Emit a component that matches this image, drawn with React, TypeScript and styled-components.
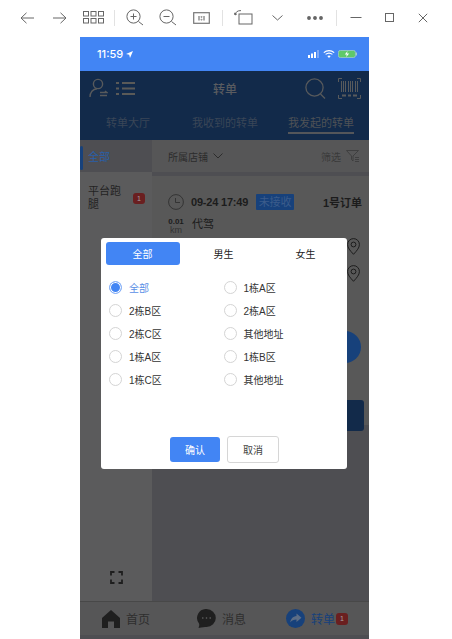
import React from "react";
import styled, { createGlobalStyle } from "styled-components";

const Global = createGlobalStyle`
  html, body { margin: 0; padding: 0; background: #fff; }
  body { font-family: "Liberation Sans", "Noto Sans CJK SC", sans-serif; width: 452px; height: 639px; overflow: hidden; }
  * { box-sizing: border-box; }
`;

const Page = styled.div`
  width: 452px;
  height: 639px;
  display: flex;
  flex-direction: column;
  overflow: hidden;
  background: #fff;
`;

const Toolbar = styled.div`
  height: 37px;
  display: flex;
  align-items: center;
  padding: 0 0 2px 10.5px;
  flex: none;
`;
const Slot = styled.div<{ $w: number }>`
  width: ${(p) => p.$w}px;
  display: flex;
  justify-content: center;
  align-items: center;
  flex: none;
`;
const ToolSep = styled.div`
  width: 1px;
  height: 16px;
  background: #e2e2e2;
  flex: none;
`;

const Phone = styled.div`
  position: relative;
  width: 289px;
  height: 602px;
  margin-left: 80px;
  display: flex;
  flex-direction: column;
  flex: none;
  overflow: hidden;
  background: #4e4e52;
`;
const StatusBar = styled.div`
  height: 34px;
  flex: none;
  background: #4285f4;
  display: flex;
  align-items: center;
  justify-content: space-between;
  padding: 0 12px 0 17px;
  color: #fff;
  font-size: 11px;
  font-family: Inter, sans-serif;
  font-weight: 500;
`;
const StatusTime = styled.div`
  display: flex;
  align-items: center;
  gap: 3px;
`;
const StatusIcons = styled.div`
  display: flex;
  align-items: center;
  gap: 3px;
`;

const Header = styled.div`
  height: 69px;
  flex: none;
  background: #122a4a;
  display: flex;
  flex-direction: column;
`;
const HeaderTop = styled.div`
  height: 34px;
  display: flex;
  align-items: center;
  padding: 0 8px 0 9px;
`;
const HeaderLeft = styled.div`
  display: flex;
  align-items: center;
  gap: 8px;
`;
const HeaderRight = styled.div`
  margin-left: auto;
  display: flex;
  align-items: center;
  gap: 12px;
`;
const HeaderTitle = styled.div`
  flex: 1;
  text-align: center;
  font-size: 12px;
  color: #5a5c60;
  font-weight: 500;
  padding-left: 10px;
`;
const HeaderTabs = styled.div`
  flex: 1;
  display: flex;
  padding-left: 26px;
`;
const HeaderTab = styled.div<{ $active?: boolean; $gap: number }>`
  margin-left: ${(p) => p.$gap}px;
  height: 29px;
  padding-top: 10px;
  font-size: 11px;
  line-height: 16px;
  white-space: nowrap;
  color: ${(p) => (p.$active ? "#4f5256" : "#3a4657")};
  border-bottom: 2px solid ${(p) => (p.$active ? "#54565a" : "transparent")};
`;

const Body = styled.div`
  flex: 1;
  display: flex;
  min-height: 0;
`;
const Sidebar = styled.div`
  width: 72px;
  flex: none;
  background: #5b5b5c;
  display: flex;
  flex-direction: column;
`;
const SideActive = styled.div`
  height: 32px;
  background: #4e4e52;
  display: flex;
  align-items: center;
  position: relative;
  padding-left: 8px;
  font-size: 11px;
  color: #2a5fa8;
  &::before {
    content: "";
    position: absolute;
    left: 0;
    top: 6px;
    width: 3px;
    height: 24px;
    border-radius: 2px;
    background: #17417b;
  }
`;
const SideItem = styled.div`
  display: flex;
  align-items: center;
  padding: 13px 7px 0 8px;
  gap: 9px;
  color: #232323;
  font-size: 11px;
  line-height: 13px;
`;
const SideText = styled.div`
  width: 36px;
`;
const Badge = styled.div`
  width: 12px;
  height: 11px;
  border-radius: 3px;
  background: #6a1f20;
  color: #a8a0a0;
  font-size: 7px;
  line-height: 11px;
  text-align: center;
  flex: none;
`;
const TabBadge = styled(Badge)`
  margin-left: -5px;
  height: 12px;
`;
const SideFoot = styled.div`
  margin-top: auto;
  margin-bottom: 17px;
  display: flex;
  justify-content: center;
`;

const Main = styled.div`
  flex: 1;
  min-width: 0;
  display: flex;
  flex-direction: column;
`;
const FilterBar = styled.div`
  height: 32px;
  flex: none;
  background: #565657;
  display: flex;
  align-items: center;
  padding: 0 10px 0 16px;
  font-size: 10px;
  color: #2c2c2c;
  gap: 5px;
`;
const FilterRight = styled.div`
  margin-left: auto;
  display: flex;
  align-items: center;
  gap: 5px;
  color: #3a3a3a;
`;
const Gap = styled.div`
  height: 4px;
  flex: none;
  background: #4e4e52;
`;
const Card = styled.div`
  height: 249px;
  flex: none;
  background: #585858;
  padding: 18px 7px 0 16px;
  color: #1c1c1c;
  position: relative;
`;
const CardTop = styled.div`
  display: flex;
  align-items: center;
  height: 16px;
`;
const Time = styled.div`
  margin-left: 7px;
  font-weight: 700;
  font-size: 11px;
  letter-spacing: -0.2px;
  white-space: nowrap;
`;
const State = styled.div`
  margin-left: 8px;
  width: 38px;
  height: 16px;
  background: #17417b;
  color: #3b5c8b;
  font-size: 11px;
  line-height: 16px;
  text-align: center;
  white-space: nowrap;
  border-radius: 1px;
`;
const OrderNo = styled.div`
  margin-left: auto;
  font-weight: 700;
  font-size: 11px;
  white-space: nowrap;
`;
const CardService = styled.div`
  display: flex;
  margin-top: 7px;
  gap: 8px;
  align-items: flex-start;
`;
const Dist = styled.div`
  width: 16px;
  text-align: center;
  font-size: 8px;
  line-height: 9px;
  font-weight: 700;
  span {
    display: block;
    font-size: 9px;
    font-weight: 400;
    color: #333;
  }
`;
const ServiceName = styled.div`
  font-size: 11px;
  line-height: 14px;
`;
const PinCol = styled.div`
  position: absolute;
  right: 9px;
  top: 62px;
  display: flex;
  flex-direction: column;
  gap: 10px;
`;
const RoundBtn = styled.div`
  position: absolute;
  right: 8px;
  top: 155px;
  width: 32px;
  height: 32px;
  border-radius: 50%;
  background: #17417b;
`;
const WideBtn = styled.div`
  position: absolute;
  right: 5px;
  top: 224px;
  width: 60px;
  height: 31px;
  border-radius: 3px;
  background: #122a4a;
`;

const TabBar = styled.div`
  height: 34px;
  flex: none;
  background: #565657;
  border-top: 1px solid #484848;
  display: flex;
  align-items: center;
  margin-bottom: 4px;
`;
const TabItem = styled.div<{ $w: number; $pad: number; $color?: string }>`
  width: ${(p) => p.$w}px;
  padding-left: ${(p) => p.$pad}px;
  display: flex;
  align-items: center;
  gap: 6px;
  font-size: 12px;
  color: ${(p) => p.$color ?? "#2e2e2e"};
  flex: none;
`;
const TabLabel = styled.span`
  white-space: nowrap;
`;

const Overlay = styled.div`
  position: absolute;
  left: 21px;
  top: 201px;
`;
const Modal = styled.div`
  width: 246px;
  height: 231px;
  background: #fff;
  border-radius: 3px;
  padding: 4px 4px 0 4.5px;
  display: flex;
  flex-direction: column;
`;
const ModalTabs = styled.div`
  display: grid;
  grid-template-columns: 74px 88px 76px;
  height: 23px;
  flex: none;
`;
const ModalTab = styled.div<{ $active?: boolean }>`
  display: flex;
  align-items: center;
  justify-content: center;
  font-size: 10px;
  border-radius: 3px;
  color: ${(p) => (p.$active ? "#fff" : "#222")};
  background: ${(p) => (p.$active ? "#4285f4" : "transparent")};
`;
const RadioGrid = styled.div`
  display: grid;
  grid-template-columns: 114.5px 1fr;
  grid-auto-rows: 23px;
  margin-top: 11px;
  padding-left: 3.5px;
`;
const RadioRow = styled.div`
  display: flex;
  align-items: center;
  gap: 7px;
`;
const RadioDot = styled.div<{ $on?: boolean }>`
  width: 13px;
  height: 13px;
  border-radius: 50%;
  flex: none;
  border: 1px solid ${(p) => (p.$on ? "#8ab2f7" : "#d4d4d4")};
  background: ${(p) => (p.$on ? "#4285f4" : "#fff")};
  box-shadow: ${(p) => (p.$on ? "inset 0 0 0 1px #fff" : "none")};
`;
const RadioLabel = styled.span<{ $on?: boolean }>`
  font-size: 10px;
  white-space: nowrap;
  color: ${(p) => (p.$on ? "#5a8fe6" : "#333")};
`;
const ModalFoot = styled.div`
  margin-top: auto;
  margin-bottom: 6px;
  display: flex;
  align-items: center;
  gap: 7px;
  padding-left: 64.5px;
`;
const ConfirmBtn = styled.div`
  width: 50px;
  height: 25px;
  border-radius: 3px;
  background: #4285f4;
  color: #fff;
  font-size: 10px;
  display: flex;
  align-items: center;
  justify-content: center;
`;
const CancelBtn = styled.div`
  width: 52px;
  height: 27px;
  border-radius: 3px;
  border: 1px solid #d6d6d6;
  color: #444;
  font-size: 10px;
  display: flex;
  align-items: center;
  justify-content: center;
  background: #fff;
`;

const Ico = ({ w, h, c = "#666", sw = 1.2, children }: { w: number; h: number; c?: string; sw?: number; children: React.ReactNode }) => (
  <svg width={w} height={h} viewBox={`0 0 ${w} ${h}`} fill="none" stroke={c} strokeWidth={sw} style={{ display: "block", flex: "none" }}>
    {children}
  </svg>
);

const radios: [string, boolean?][] = [
  ["全部", true], ["1栋A区"], ["2栋B区"], ["2栋A区"], ["2栋C区"], ["其他地址"], ["1栋A区"], ["1栋B区"], ["1栋C区"], ["其他地址"],
];

export default function App() {
  return (
    <Page>
      <Global />
      <Toolbar>
        <Slot $w={33}><Ico w={14} h={12} sw={1}><path d="M14 6H1M6.500 .8L1 6l5.500 5.200" /></Ico></Slot>
        <Slot $w={33}><Ico w={14} h={12} sw={1}><path d="M0 6h13M7.500 .8L13 6l-5.500 5.200" /></Ico></Slot>
        <Slot $w={33}>
          <Ico w={21} h={13} sw={1}>
            <rect x=".5" y=".5" width="5" height="4.500" /><rect x="8" y=".5" width="5" height="4.500" /><rect x="15.500" y=".5" width="5" height="4.500" />
            <rect x=".5" y="7.500" width="5" height="4.500" /><rect x="8" y="7.500" width="5" height="4.500" /><rect x="15.500" y="7.500" width="5" height="4.500" />
          </Ico>
        </Slot>
        <Slot $w={9}><ToolSep /></Slot>
        <Slot $w={33}><Ico w={18} h={18} sw={1}><circle cx="7.500" cy="7.500" r="6.600" /><path d="M12.500 12.500L17 16M4.500 7.500h6M7.500 4.500v6" /></Ico></Slot>
        <Slot $w={33}><Ico w={18} h={18} sw={1}><circle cx="7.500" cy="7.500" r="6.600" /><path d="M12.500 12.500L17 16M4.500 7.500h6" /></Ico></Slot>
        <Slot $w={33}>
          <Ico w={17} h={12} c="#777"><rect x=".7" y=".7" width="15.600" height="10.600" /><path d="M6 4v4.500M11 4v4.500" /><circle cx="8.500" cy="4.800" r=".3" /><circle cx="8.500" cy="7.600" r=".3" /></Ico>
        </Slot>
        <Slot $w={9}><ToolSep /></Slot>
        <Slot $w={33}>
          <Ico w={19} h={17} sw={1}><rect x="5" y="5" width="13" height="10" /><path d="M1 6C1.500 3 3.500 1.500 7 1.600M1 6L.5 3.800M1 6l2-1.200" /></Ico>
        </Slot>
        <Slot $w={35}><Ico w={11} h={6} sw={1}><path d="M.5 .5L5.500 5 10.500 .5" /></Ico></Slot>
        <Slot $w={41}>
          <Ico w={16} h={4}><circle cx="2" cy="2" r="1.300" fill="#666" /><circle cx="8" cy="2" r="1.300" fill="#666" /><circle cx="14" cy="2" r="1.300" fill="#666" /></Ico>
        </Slot>
        <ToolSep />
        <Slot $w={38}><Ico w={12} h={3} sw={1}><path d="M.5 1.500h11" /></Ico></Slot>
        <Slot $w={30}><Ico w={9} h={9} sw={1}><rect x=".5" y=".5" width="8" height="8" /></Ico></Slot>
        <Slot $w={36}><Ico w={10} h={10} sw={1}><path d="M.8 .8l8.400 8.400M9.200 .8L.8 9.200" /></Ico></Slot>
      </Toolbar>
      <Phone>
        <StatusBar>
          <StatusTime>
            11:59
            <svg width="7" height="7" viewBox="0 0 7 7"><path d="M7 0L0 3l3.200.8L4 7z" fill="#fff" /></svg>
          </StatusTime>
          <StatusIcons>
            <svg width="12" height="8" viewBox="0 0 12 8">
              <rect x="0" y="5" width="2" height="3" fill="#fff" /><rect x="3" y="3.500" width="2" height="4.500" fill="#fff" /><rect x="6" y="2" width="2" height="6" fill="#fff" /><rect x="9" y="0" width="2" height="8" fill="#7ea9f6" />
            </svg>
            <svg width="12" height="8" viewBox="0 0 12 8" fill="none" stroke="#fff" strokeWidth="1.200">
              <path d="M.8 2.600C3.800 0 8.200 0 11.200 2.600M2.600 4.400c2-1.600 4.800-1.600 6.800 0" /><path d="M6 8L4.300 6.100c1-.8 2.400-.8 3.400 0z" fill="#fff" stroke="none" />
            </svg>
            <svg width="19" height="8" viewBox="0 0 19 8">
              <rect x=".4" y=".4" width="17" height="7.200" rx="2" fill="#5fc96a" stroke="#a5d0c8" strokeWidth=".8" />
              <rect x="18" y="2.500" width="1" height="3" fill="#a5d0c8" />
              <path d="M9.600 1L6.800 4.400h2l-.6 2.600 3-3.600H9z" fill="#fff" />
            </svg>
          </StatusIcons>
        </StatusBar>
        <Header>
          <HeaderTop>
            <HeaderLeft>
              <Ico w={19} h={20} c="#585a5c" sw={1.400}>
                <circle cx="9" cy="6" r="4.600" /><path d="M1 19c0-4.500 2.800-8 7-8.300" />
                <path d="M11 14.500h7l-2-1.500M18 17.500h-7" />
              </Ico>
              <Ico w={19} h={15} c="#5a5a58" sw={1.800}>
                <path d="M0 2h3M6 2h13M0 7.500h3M6 7.500h13M0 13h3M6 13h13" />
              </Ico>
            </HeaderLeft>
            <HeaderTitle>转单</HeaderTitle>
            <HeaderRight>
              <Ico w={21} h={21} c="#585a5c" sw={1.300}>
                <circle cx="9.500" cy="9.500" r="8.600" /><path d="M15.500 16l4.500 4.500" />
              </Ico>
              <Ico w={23} h={21} c="#585a5c" sw={1}>
                <path d="M.5 4V.5h3.500M19 .5h3.500V4M.5 17v3.500H4M19 20.500h3.500V17" />
                <path d="M3.500 3v11M5.500 3v11M7.500 3v11M10.500 3v11M12.500 3v11M14.500 3v11M17.500 3v11M19.500 3v11" />
                <path d="M4 17.500h4M10 17.500h3M15 17.500h4" strokeWidth="2" />
              </Ico>
            </HeaderRight>
          </HeaderTop>
          <HeaderTabs>
            <HeaderTab $gap={0}>转单大厅</HeaderTab>
            <HeaderTab $gap={42}>我收到的转单</HeaderTab>
            <HeaderTab $gap={30} $active>我发起的转单</HeaderTab>
          </HeaderTabs>
        </Header>
        <Body>
          <Sidebar>
            <SideActive>全部</SideActive>
            <SideItem>
              <SideText>平台跑腿</SideText>
              <Badge>1</Badge>
            </SideItem>
            <SideFoot>
              <Ico w={13} h={13} c="#1e1e1e" sw={1.800}>
                <path d="M4.500 1H1v3.500M8.500 1H12v3.500M4.500 12H1V8.500M8.500 12H12V8.500" />
              </Ico>
            </SideFoot>
          </Sidebar>
          <Main>
            <FilterBar>
              所属店铺
              <Ico w={10} h={6} c="#2c2c2c" sw={1}><path d="M.5 .5L5 5l4.500-4.500" /></Ico>
              <FilterRight>
                筛选
                <Ico w={13} h={12} c="#3a3a3a" sw={.8}><path d="M.5 .5h12L7 6v5L5.500 9.500V6zM9 7.500h4M9 9.500h4M9 11.500h4" /></Ico>
              </FilterRight>
            </FilterBar>
            <Gap />
            <Card>
              <CardTop>
                <Ico w={16} h={16} c="#303030" sw={.9}><circle cx="8" cy="8" r="7.400" /><path d="M7.500 4v4.500H12" /></Ico>
                <Time>09-24 17:49</Time>
                <State>未接收</State>
                <OrderNo>1号订单</OrderNo>
              </CardTop>
              <CardService>
                <Dist>0.01<span>km</span></Dist>
                <ServiceName>代驾</ServiceName>
              </CardService>
              <PinCol>
                <Ico w={13} h={17} c="#1c1c1c" sw={1}><path d="M6.500 16.300C3 12.500.6 9.800.6 6.500a5.900 5.900 0 0111.800 0c0 3.300-2.400 6-5.900 9.800z" /><circle cx="6.500" cy="6.500" r="2.400" /></Ico>
                <Ico w={13} h={17} c="#1c1c1c" sw={1}><path d="M6.500 16.300C3 12.500.6 9.800.6 6.500a5.900 5.900 0 0111.800 0c0 3.300-2.400 6-5.900 9.800z" /><circle cx="6.500" cy="6.500" r="2.400" /></Ico>
              </PinCol>
              <RoundBtn />
              <WideBtn />
            </Card>
          </Main>
        </Body>
        <TabBar>
          <TabItem $w={98} $pad={22}>
            <svg width="18" height="18" viewBox="0 0 18 18"><path d="M9 0L0 8v10h6v-6.500h6V18h6V8z" fill="#1f1f1f" /></svg>
            <TabLabel>首页</TabLabel>
          </TabItem>
          <TabItem $w={96} $pad={19}>
            <svg width="19" height="19" viewBox="0 0 19 19"><path d="M9.500 0a9.300 9 0 110 18c-2 0-4 0-8 1 .8-2 1-3 .5-4.500A9 9 0 019.500 0z" fill="#1f1f1f" /><circle cx="5.800" cy="9" r=".8" fill="#666" /><circle cx="9.500" cy="9" r=".8" fill="#666" /><circle cx="13.200" cy="9" r=".8" fill="#666" /></svg>
            <TabLabel>消息</TabLabel>
          </TabItem>
          <TabItem $w={95} $pad={12} $color="#17417b">
            <svg width="19" height="19" viewBox="0 0 19 19"><circle cx="9.500" cy="9.500" r="9.500" fill="#17417b" /><path d="M10.500 4.500l5 4.300-5 4.200v-2.600c-2.800 0-4.600.8-6.200 3 .4-3.400 2.500-6 6.200-6.300z" fill="#5c6d86" /></svg>
            <TabLabel>转单</TabLabel>
            <TabBadge>1</TabBadge>
          </TabItem>
        </TabBar>
        <Overlay>
          <Modal>
            <ModalTabs>
              <ModalTab $active>全部</ModalTab>
              <ModalTab>男生</ModalTab>
              <ModalTab>女生</ModalTab>
            </ModalTabs>
            <RadioGrid>
              {radios.map(([label, on], i) => (
                <RadioRow key={i}>
                  <RadioDot $on={on} />
                  <RadioLabel $on={on}>{label}</RadioLabel>
                </RadioRow>
              ))}
            </RadioGrid>
            <ModalFoot>
              <ConfirmBtn>确认</ConfirmBtn>
              <CancelBtn>取消</CancelBtn>
            </ModalFoot>
          </Modal>
        </Overlay>
      </Phone>
    </Page>
  );
}
